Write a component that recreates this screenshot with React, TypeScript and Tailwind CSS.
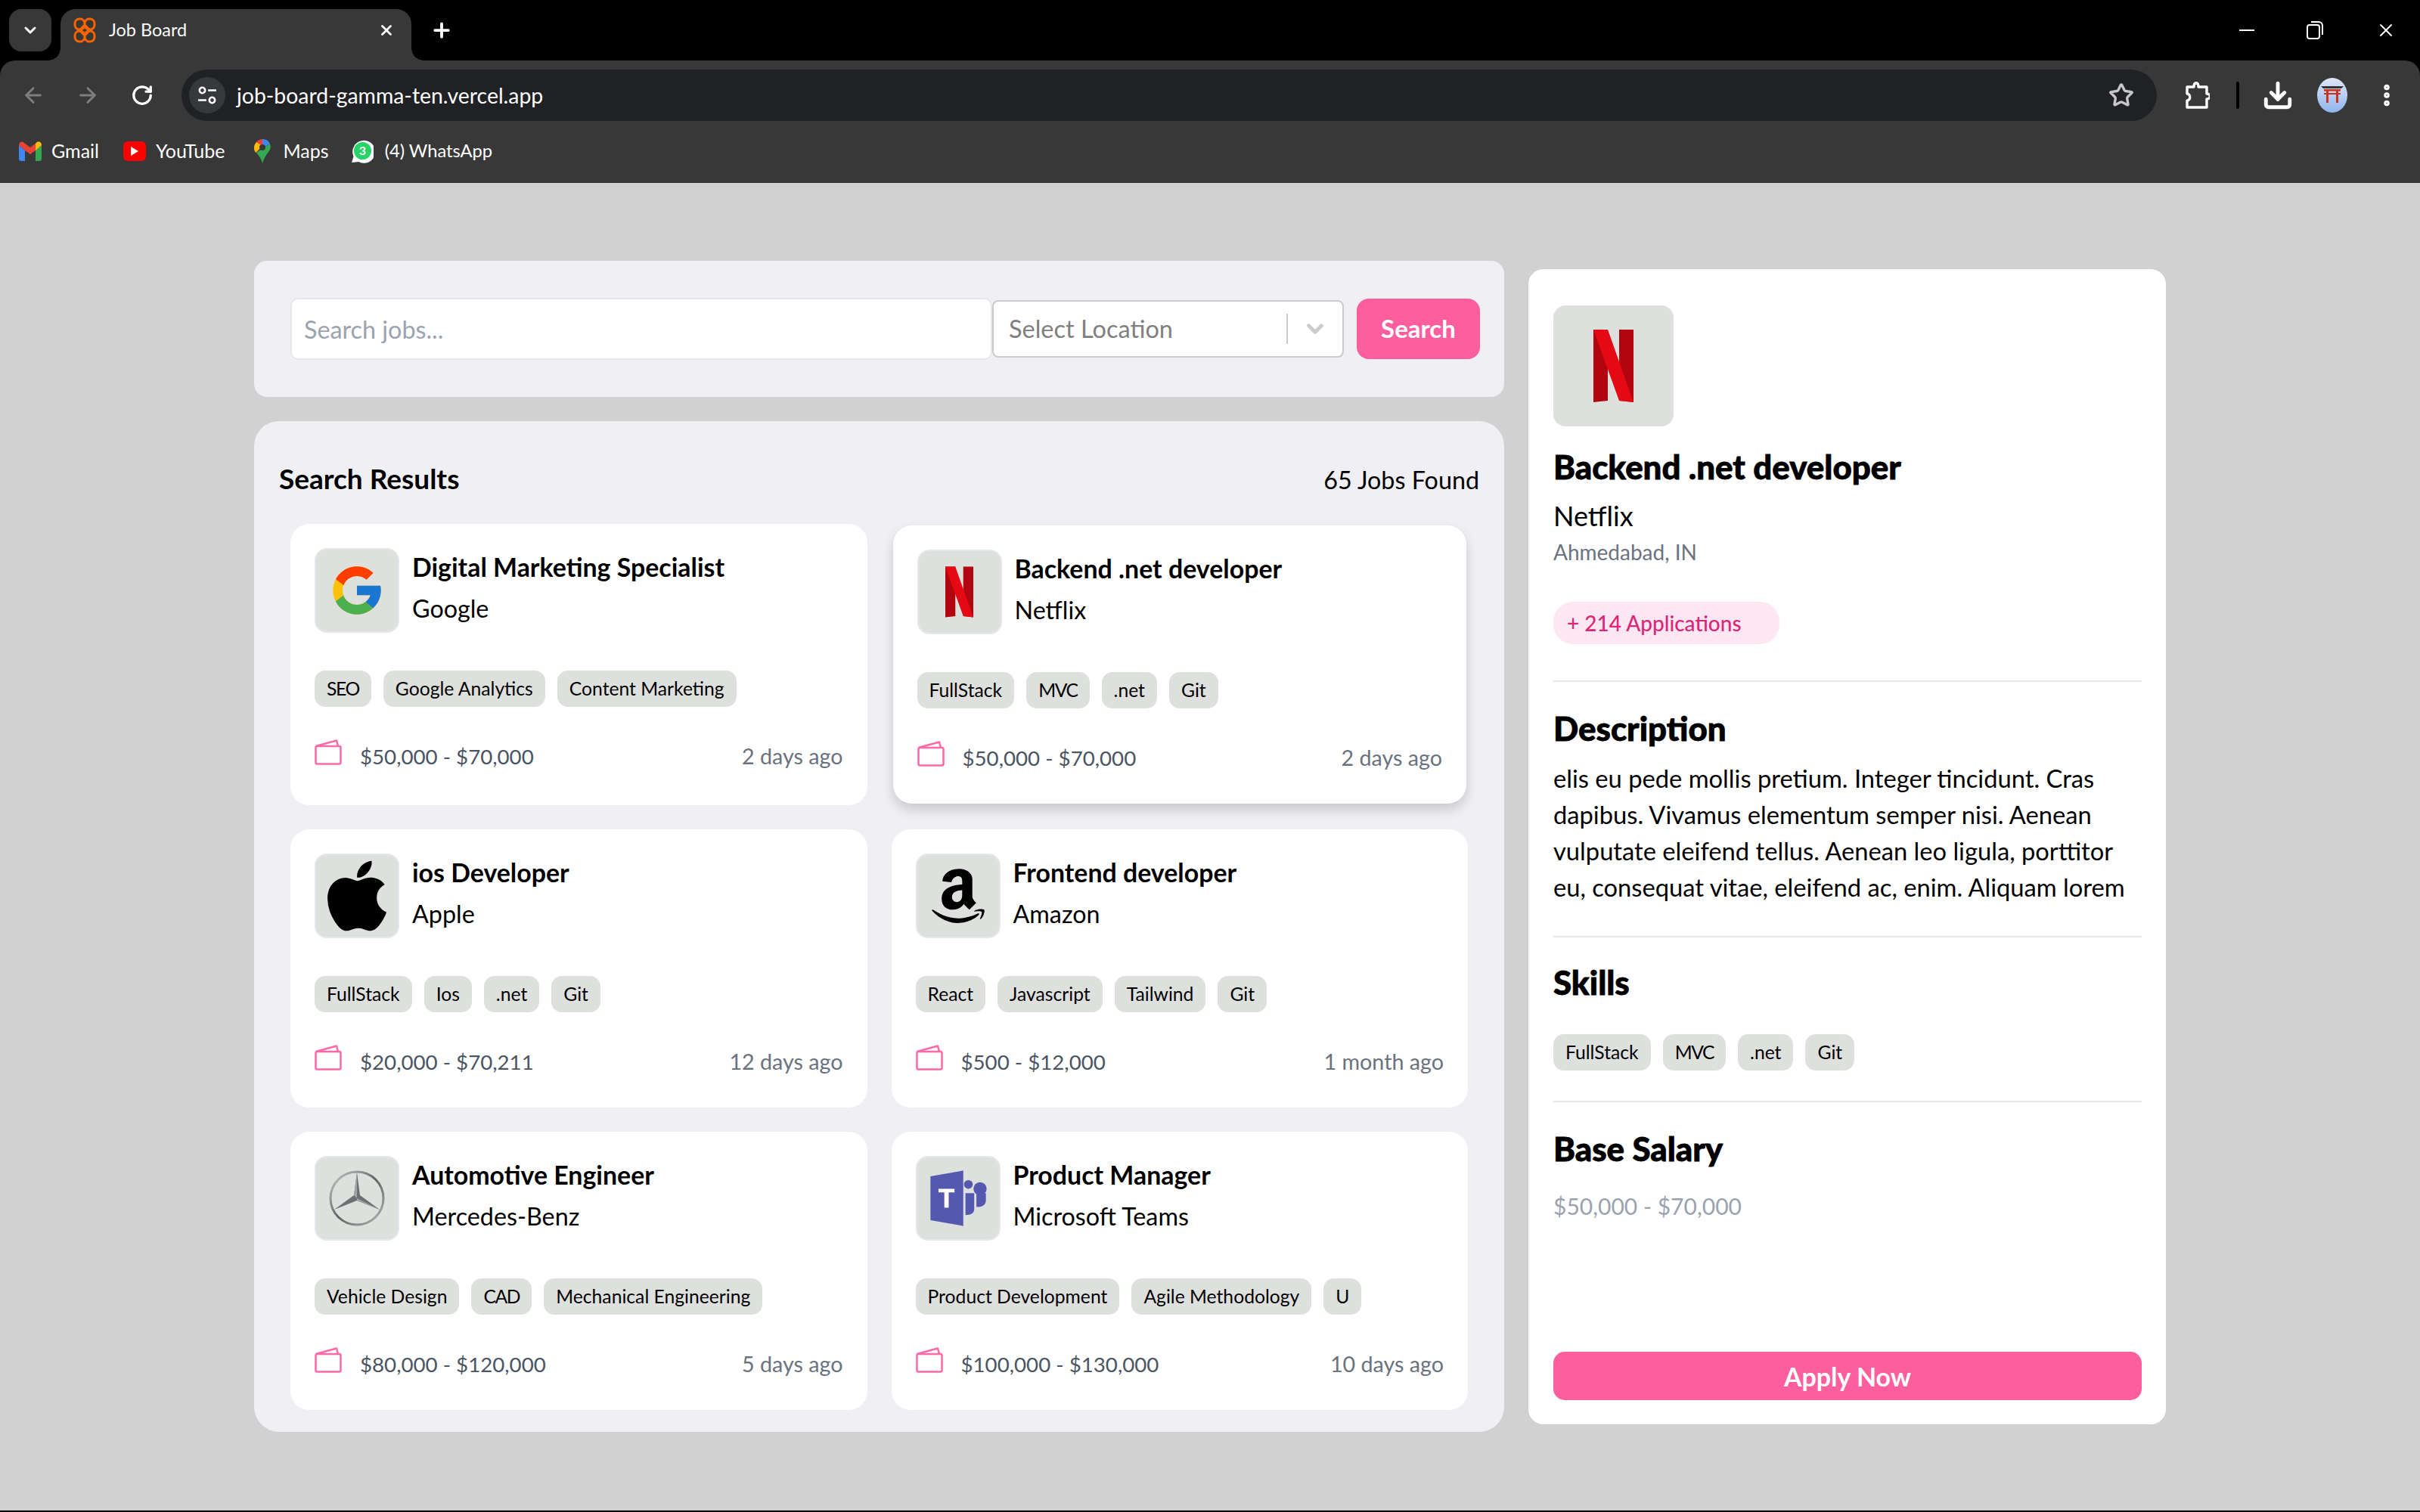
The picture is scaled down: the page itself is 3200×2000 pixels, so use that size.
import { FaAmazon, FaApple } from "react-icons/fa";
import { FcGoogle } from "react-icons/fc";
import { ArrowLeft, ArrowRight, ChevronDown, Download, MoreVertical, Plus, RotateCw, Star, X } from "lucide-react";
import type { ReactNode } from "react";

const font = { fontFamily: "Lato, 'Open Sans', sans-serif" };

type Job = {
  title: string;
  company: string;
  logo: ReactNode;
  tags: string[];
  salary: string;
  posted: string;
  selected?: boolean;
};

function NetflixLogo({ className }: { className: string }) {
  return (
    <svg viewBox="0 0 53 96" className={className}>
      <path d="M0 0h19v94l-19 2z" fill="#b1060f" />
      <path d="M34 0h19v96l-19-2z" fill="#b1060f" />
      <path d="M0 0h19l34 96-19-2z" fill="#e50914" />
    </svg>
  );
}

function MercedesLogo() {
  return (
    <svg viewBox="0 0 74 74" className="h-[74px] w-[74px]">
      <defs>
        <linearGradient id="mb" x1="0" y1="0" x2="1" y2="1">
          <stop offset="0" stopColor="#c9cccc" />
          <stop offset="0.5" stopColor="#5f6364" />
          <stop offset="1" stopColor="#b5b8b8" />
        </linearGradient>
      </defs>
      <circle cx="37" cy="37" r="35" fill="none" stroke="url(#mb)" strokeWidth="3" />
      <path d="M37 3l4 30 26 19-30-12-30 12 26-19z" fill="#6c7072" />
      <path d="M37 3v34l-4-4zM37 37L67 52 37 40z" fill="#9fa3a4" />
    </svg>
  );
}

function TeamsLogo() {
  return (
    <svg viewBox="0 0 112 112" className="h-full w-full">
      <path d="M18 26l45-8v76l-45-8z" fill="#5558af" />
      <path d="M29 43h22v5h-8v21h-6v-21h-8z" fill="#fff" />
      <circle cx="70" cy="37" r="6" fill="#5558af" />
      <circle cx="86" cy="43" r="9" fill="#5558af" />
      <path d="M66 49h12v22c0 5-4 8-12 8z" fill="#5558af" />
      <path d="M81 49h13v10c0 6-5 9-13 9z" fill="#5558af" />
    </svg>
  );
}

const jobs: Job[] = [
  {
    title: "Digital Marketing Specialist",
    company: "Google",
    logo: <FcGoogle size={76} />,
    tags: ["SEO", "Google Analytics", "Content Marketing"],
    salary: "$50,000 - $70,000",
    posted: "2 days ago",
  },
  {
    title: "Backend .net developer",
    company: "Netflix",
    logo: <NetflixLogo className="h-[68px] w-[37px]" />,
    tags: ["FullStack", "MVC", ".net", "Git"],
    salary: "$50,000 - $70,000",
    posted: "2 days ago",
    selected: true,
  },
  {
    title: "ios Developer",
    company: "Apple",
    logo: <FaApple size={106} color="#000" />,
    tags: ["FullStack", "Ios", ".net", "Git"],
    salary: "$20,000 - $70,211",
    posted: "12 days ago",
  },
  {
    title: "Frontend developer",
    company: "Amazon",
    logo: <FaAmazon size={82} color="#000" />,
    tags: ["React", "Javascript", "Tailwind", "Git"],
    salary: "$500 - $12,000",
    posted: "1 month ago",
  },
  {
    title: "Automotive Engineer",
    company: "Mercedes-Benz",
    logo: <MercedesLogo />,
    tags: ["Vehicle Design", "CAD", "Mechanical Engineering"],
    salary: "$80,000 - $120,000",
    posted: "5 days ago",
  },
  {
    title: "Product Manager",
    company: "Microsoft Teams",
    logo: <TeamsLogo />,
    tags: ["Product Development", "Agile Methodology", "U"],
    salary: "$100,000 - $130,000",
    posted: "10 days ago",
  },
];

function Tag({ label }: { label: string }) {
  // Lato's capitals run wider than the reference font
  const allCaps = label.length > 1 && label === label.toUpperCase();
  return (
    <span className={allCaps ? "flex h-[48px] items-center rounded-[14px] bg-[#dee0de] px-[16px] text-[24.7px] tracking-[-1.4px] text-black" : "flex h-[48px] items-center rounded-[14px] bg-[#dee0de] px-[16px] text-[24.7px] text-black"}>
      {label}
    </span>
  );
}

function WalletIcon() {
  return (
    <svg viewBox="0 0 36 34" className="mb-[12px] h-[34px] w-[36px] shrink-0" fill="none" stroke="#ff69a8" strokeWidth="2.5" strokeLinejoin="round">
      <rect x="1.5" y="9" width="33" height="23.5" rx="2" />
      <path d="M1.5 9L29 1.5l2 7.5" />
    </svg>
  );
}

function JobCard({ job }: { job: Job }) {
  return (
    <div className={job.selected ? "m-[2px] rounded-[25px] bg-white p-[32px] shadow-[0_8px_16px_rgba(0,0,0,0.16)]" : "rounded-[25px] bg-white p-[32px]"}>
      <div className="flex gap-[17px]">
        <div className="flex h-[112px] w-[112px] shrink-0 items-center justify-center rounded-[16px] border-2 border-[#e5e7eb] bg-[#dee0de]">
          {job.logo}
        </div>
        <div>
          <div className="text-[33.9px] leading-[50px] font-bold text-black">{job.title}</div>
          <div className="mt-[5px] text-[32.3px] leading-[50px] text-black">{job.company}</div>
        </div>
      </div>
      <div className="mt-[50px] flex gap-[16px]">
        {job.tags.map((tag) => (
          <Tag key={tag} label={tag} />
        ))}
      </div>
      <div className="mt-[43px] flex items-center">
        <WalletIcon />
        <span className="ml-[24px] text-[27.7px] text-[#4b5563]">{job.salary}</span>
        <span className="ml-auto text-[28.7px] text-[#6b7280]">{job.posted}</span>
      </div>
    </div>
  );
}

function BrowserChrome() {
  return (
    <div className="shrink-0 bg-black text-white">
      <div className="flex h-[80px] items-end pl-[12px]">
        <div className="mb-[12px] flex h-[56px] w-[56px] items-center justify-center rounded-[16px] bg-[#383838]">
          <ChevronDown size={24} strokeWidth={3} />
        </div>
        <div className="relative ml-[12px] flex h-[68px] w-[464px] items-center rounded-t-[20px] bg-[#383838] pb-[12px] pl-[16px] pr-[22px]">
          <span className="absolute bottom-0 left-[-16px] h-[16px] w-[16px] bg-[radial-gradient(circle_at_0_0,transparent_15.5px,#383838_16px)]" />
          <span className="absolute bottom-0 right-[-16px] h-[16px] w-[16px] bg-[radial-gradient(circle_at_100%_0,transparent_15.5px,#383838_16px)]" />
          <svg viewBox="0 0 32 34" className="h-[34px] w-[32px]" fill="none" stroke="#f96302" strokeWidth="3">
            <rect x="3" y="2" width="13" height="14" rx="6" />
            <rect x="16" y="2" width="13" height="14" rx="6" />
            <rect x="3" y="18" width="13" height="14" rx="6" />
            <rect x="16" y="18" width="13" height="14" rx="6" />
            <path d="M16 10l7 7-7 7-7-7z" />
          </svg>
          <span className="ml-[16px] text-[23.5px]" style={font}>Job Board</span>
          <X size={22} strokeWidth={3} className="ml-auto" />
        </div>
        <Plus size={30} strokeWidth={3} className="mb-[25px] ml-[25px]" />
        <div className="mb-[24px] ml-auto flex items-center pr-[31px]">
          <svg viewBox="0 0 20 32" className="h-[32px] w-[20px]"><path d="M0 16h20" stroke="#fff" strokeWidth="2" /></svg>
          <svg viewBox="0 0 22 24" className="ml-[69px] h-[24px] w-[22px]" fill="none" stroke="#fff" strokeWidth="2">
            <rect x="1" y="5" width="16" height="18" rx="3" />
            <path d="M6 1h10a5 5 0 015 5v12" />
          </svg>
          <X size={28} strokeWidth={1.6} className="ml-[69px]" />
        </div>
      </div>
      <div className="h-[162px] rounded-t-[20px] bg-[#383838]">
        <div className="flex h-[92px] items-center">
          <ArrowLeft size={32} strokeWidth={2.2} className="ml-[28px] text-[#7e7e7e]" />
          <ArrowRight size={32} strokeWidth={2.2} className="ml-[40px] text-[#7e7e7e]" />
          <RotateCw size={30} strokeWidth={2.6} className="ml-[41px]" />
          <div className="ml-[37px] flex h-[68px] w-[2612px] items-center rounded-full bg-[#202124] pl-[10px] pr-[30px]">
            <div className="flex h-[48px] w-[48px] items-center justify-center rounded-full bg-[#37383b]">
              <svg viewBox="0 0 24 24" className="h-[26px] w-[26px]" fill="none" stroke="#fff" strokeWidth="2.4">
                <circle cx="6" cy="6" r="3.4" />
                <path d="M13 6h10M1 18h10" />
                <circle cx="18" cy="18" r="3.4" />
              </svg>
            </div>
            <span className="ml-[15px] text-[28.4px]" style={font}>job-board-gamma-ten.vercel.app</span>
            <Star size={34} strokeWidth={2.4} className="ml-auto text-[#c7c7c7]" />
          </div>
          <div className="ml-[38px] flex items-center">
            <svg viewBox="0 0 32 36" className="h-[36px] w-[32px]" fill="none" stroke="#fff" strokeWidth="3.4" strokeLinejoin="round">
              <path d="M2 7h9c0-7 6-7 6 0h11v9c6 0 6 7 0 7v11H2v-9c5 0 5-9 0-9z" />
            </svg>
            <div className="ml-[35px] h-[36px] w-[4px] rounded-full bg-black" />
            <Download size={42} strokeWidth={2.8} className="ml-[30px]" />
            <svg viewBox="0 0 40 46" className="ml-[31px] h-[46px] w-[40px]">
              <defs>
                <linearGradient id="sky" x1="0" y1="0" x2="0" y2="1">
                  <stop offset="0" stopColor="#dfe6f5" />
                  <stop offset="1" stopColor="#8fb4ee" />
                </linearGradient>
              </defs>
              <ellipse cx="20" cy="23" rx="20" ry="23" fill="url(#sky)" />
              <path d="M5 11h30l-3 3H8z" fill="#333" />
              <path d="M9 15h22v2.500H9zM9 20h22v2H9zM12 15h3v18h-3zM25 15h3v18h-3z" fill="#c8321f" />
            </svg>
            <MoreVertical size={36} strokeWidth={3} className="ml-[34px]" />
          </div>
        </div>
        <div className="flex h-[70px] items-center pb-[14px] pl-[25px] text-[25px]" style={font}>
          <svg viewBox="0 0 30 26" className="h-[26px] w-[30px]">
            <path d="M0 5v18a3 3 0 003 3h5V12z" fill="#4285f4" />
            <path d="M30 5v18a3 3 0 01-3 3h-5V12z" fill="#34a853" />
            <path d="M0 5c0-4 4-6 7-3l8 6 8-6c3-3 7-1 7 3l-8 7-7 5-7-5z" fill="#ea4335" />
            <path d="M22 3l1-1c3-3 7-1 7 3l-8 7z" fill="#fbbc04" />
          </svg>
          <span className="ml-[13px]">Gmail</span>
          <span className="ml-[32px] flex h-[26px] w-[30px] items-center justify-center rounded-[6px] bg-[#f00]">
            <svg viewBox="0 0 10 12" className="h-[12px] w-[10px]"><path d="M0 0l10 6-10 6z" fill="#fff" /></svg>
          </span>
          <span className="ml-[13px]">YouTube</span>
          <svg viewBox="0 0 22 32" className="ml-[38px] h-[32px] w-[22px]">
            <path d="M11 0a11 11 0 00-8 18l8-9z" fill="#ea4335" />
            <path d="M3 4a11 11 0 00-1 14l9-9z" fill="#fbbc04" />
            <path d="M11 0a11 11 0 0110 6l-10 6z" fill="#4285f4" />
            <path d="M21 6a11 11 0 01-2 11c-4 5-6 9-8 15-1-5-4-9-8-14z" fill="#34a853" />
            <circle cx="11" cy="11" r="4" fill="#383838" />
          </svg>
          <span className="ml-[17px]">Maps</span>
          <svg viewBox="0 0 30 32" className="ml-[29px] h-[32px] w-[30px]">
            <path d="M1 31l2.500-8A15 15 0 1110 30z" fill="#fff" />
            <circle cx="15.500" cy="15.500" r="11.500" fill="#25d366" />
            <text x="15.500" y="21" textAnchor="middle" fontSize="16" fontWeight="700" fill="#fff" fontFamily="Lato, sans-serif">3</text>
          </svg>
          <span className="ml-[15px] text-[23.7px]">(4) WhatsApp</span>
        </div>
      </div>
    </div>
  );
}

export default function App() {
  return (
    <div className="flex h-[2000px] w-[3200px] flex-col bg-black" style={font}>
      <BrowserChrome />
      <main className="flex flex-1 items-start gap-[32px] border-b-2 border-black bg-[#d1d1d1] pl-[336px] pt-[103px]">
        <div className="w-[1653px]">
          <div className="flex h-[180px] items-center rounded-[17px] bg-[#efeff4] pl-[48px] pr-[32px]">
            <input
              placeholder="Search jobs..."
              className="h-[82px] flex-1 rounded-[10px] border-2 border-[#e5e7eb] bg-white px-[16px] text-[32.3px] outline-none placeholder:text-[#9ca3af]"
            />
            <div className="flex h-[76px] w-[465px] items-center rounded-[8px] border-2 border-[#cccccc] bg-white pl-[20px]">
              <span className="text-[32.5px] text-[#808080]">Select Location</span>
              <div className="ml-auto h-[40px] w-[2px] bg-[#cccccc]" />
              <ChevronDown size={34} strokeWidth={3.4} className="mx-[19px] text-[#cccccc]" />
            </div>
            <button className="ml-[17px] h-[80px] w-[163px] rounded-[16px] bg-[#fd5f9e] text-[33px] font-bold text-white">Search</button>
          </div>
          <div className="mt-[32px] h-[1337px] rounded-[33px] bg-[#efeff4] px-[33px] pt-[48px]">
            <div className="flex items-baseline justify-between leading-[56px] text-black">
              <h2 className="text-[37px] font-bold">Search Results</h2>
              <span className="text-[32.3px]">65 Jobs Found</span>
            </div>
            <div className="mx-[15px] mt-[30px] grid grid-cols-2 grid-rows-[372px_368px_368px] gap-[32px]">
              {jobs.map((job) => (
                <JobCard key={job.title} job={job} />
              ))}
            </div>
          </div>
        </div>
        <aside className="mt-[11px] flex h-[1528px] w-[843px] flex-col rounded-[20px] bg-white pb-[32px] pl-[33px] pr-[32px] pt-[48px] text-black">
          <div className="flex h-[160px] w-[159px] items-center justify-center rounded-[16px] bg-[#dee0de]">
            <NetflixLogo className="h-[96px] w-[53px]" />
          </div>
          <h2 className="mt-[22px] text-[43.8px] leading-[62px] font-black [-webkit-text-stroke:0.8px_#000]">Backend .net developer</h2>
          <div className="mt-[6px] text-[36px] leading-[56px]">Netflix</div>
          <div className="text-[28px] leading-[40px] text-[#6b7280]">Ahmedabad, IN</div>
          <div className="mt-[46px] flex h-[56px] w-[299px] items-center rounded-[26px] bg-[#fce7f3] pl-[18px] text-[28px] font-medium text-[#db2777]">
            + 214 Applications
          </div>
          <div className="mt-[48px] h-[2px] bg-[#e5e7eb]" />
          <h3 className="mt-[30px] text-[43.8px] leading-[62px] font-black [-webkit-text-stroke:0.8px_#000]">Description</h3>
          <p className="mt-[12px] text-[32.7px] leading-[48px]">
            elis eu pede mollis pretium. Integer tincidunt. Cras dapibus. Vivamus elementum semper nisi. Aenean vulputate eleifend tellus. Aenean leo ligula, porttitor eu, consequat vitae, eleifend ac, enim. Aliquam lorem
          </p>
          <div className="mt-[40px] h-[2px] bg-[#e5e7eb]" />
          <h3 className="mt-[28px] text-[43.8px] leading-[62px] font-black [-webkit-text-stroke:0.8px_#000]">Skills</h3>
          <div className="mt-[38px] flex gap-[16px]">
            {["FullStack", "MVC", ".net", "Git"].map((skill) => (
              <Tag key={skill} label={skill} />
            ))}
          </div>
          <div className="mt-[40px] h-[2px] bg-[#e5e7eb]" />
          <h3 className="mt-[30px] text-[43.8px] leading-[62px] font-black [-webkit-text-stroke:0.8px_#000]">Base Salary</h3>
          <div className="mt-[20px] text-[30px] leading-[50px] text-[#9ca3af]">$50,000 - $70,000</div>
          <button className="mt-auto h-[64px] rounded-[15px] bg-[#fd5f9e] text-[34px] font-bold text-white">Apply Now</button>
        </aside>
      </main>
    </div>
  );
}
